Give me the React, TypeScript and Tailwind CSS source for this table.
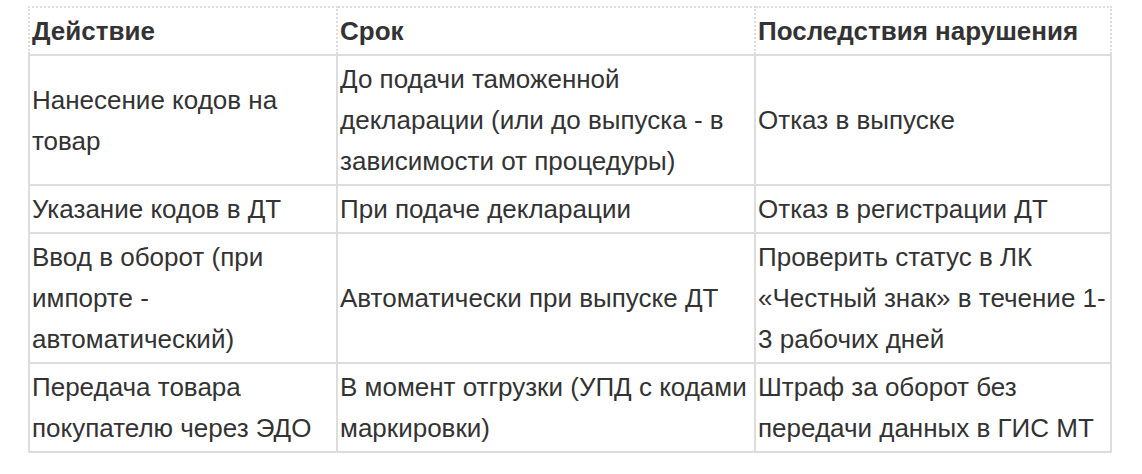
import React from "react";

const rows: string[][] = [
  [
    "Нанесение кодов на товар",
    "До подачи таможенной декларации (или до выпуска - в зависимости от процедуры)",
    "Отказ в выпуске",
  ],
  ["Указание кодов в ДТ", "При подаче декларации", "Отказ в регистрации ДТ"],
  [
    "Ввод в оборот (при импорте - автоматический)",
    "Автоматически при выпуске ДТ",
    "Проверить статус в ЛК «Честный знак» в течение 1-3 рабочих дней",
  ],
  [
    "Передача товара покупателю через ЭДО",
    "В момент отгрузки (УПД с кодами маркировки)",
    "Штраф за оборот без передачи данных в ГИС МТ",
  ],
];

export default function App() {
  return (
    <div
      className="bg-white w-[1142px] h-[474px] pl-[28px] pt-[6px] text-[#333]"
      style={{ fontFamily: '"Liberation Sans", Arial, sans-serif' }}
    >
      <table className="table-fixed border-collapse w-[1082px] text-[26px] leading-[41px]">
        <colgroup>
          <col className="w-[308px]" />
          <col className="w-[418px]" />
          <col className="w-[356px]" />
        </colgroup>
        <thead>
          <tr>
            {["Действие", "Срок", "Последствия нарушения"].map((h) => (
              <th
                key={h}
                className="border-2 border-dotted border-[#ddd] text-left font-bold pl-[2px] pr-[2px] pt-[3px] pb-[2px] align-middle"
              >
                {h}
              </th>
            ))}
          </tr>
        </thead>
        <tbody>
          {rows.map((r, i) => (
            <tr key={i}>
              {r.map((c, j) => (
                <td
                  key={j}
                  className="border-2 border-solid border-[#ddd] pl-[2px] pr-[2px] pt-[3px] pb-[2px] align-middle font-normal"
                >
                  {c}
                </td>
              ))}
            </tr>
          ))}
        </tbody>
      </table>
    </div>
  );
}
